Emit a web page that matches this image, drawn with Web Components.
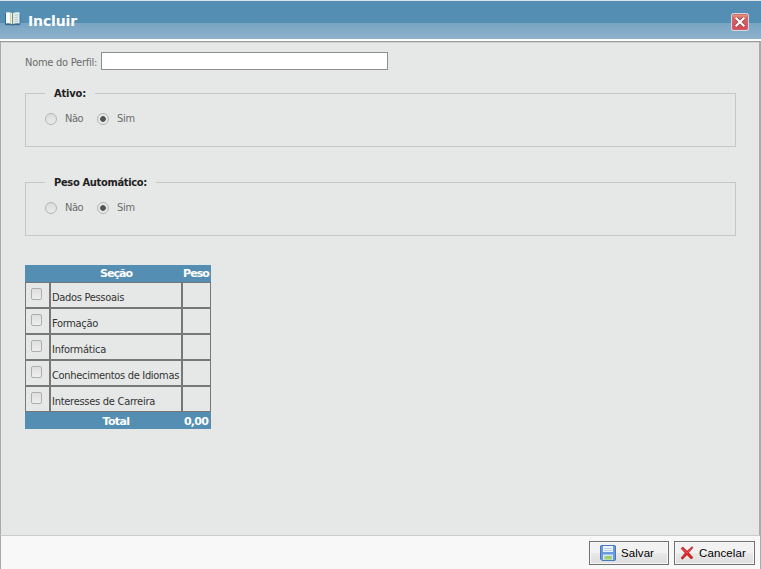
<!DOCTYPE html>
<html lang="pt-BR">
<head>
<meta charset="utf-8">
<title>Incluir</title>
<style>
  body {
    margin: 0;
    background: #f8f8f8;
    font: 11px/14px "DejaVu Sans Condensed", "DejaVu Sans", sans-serif;
    color: #6b6b6b;
  }
</style>
</head>
<body>
<profile-dialog></profile-dialog>

<script>
// Text run that is tracked to a given width in pixels
class FitText extends HTMLElement {
  constructor() {
    super();
    this.attachShadow({ mode: 'open' });
  }

  connectedCallback() {
    this.shadowRoot.innerHTML = `
      <style>
        :host { display: inline-block; white-space: nowrap; }
        span { display: inline-block; }
      </style>
      <span><slot></slot></span>
    `;
    const span = this.shadowRoot.querySelector('span');
    const target = Number(this.getAttribute('width'));
    const count = this.textContent.length;
    const natural = span.getBoundingClientRect().width;
    if (target && natural) {
      span.style.letterSpacing = `${(target - natural) / count}px`;
      this.style.width = `${target}px`;
    }
  }
}

class DialogHeader extends HTMLElement {
  constructor() {
    super();
    this.attachShadow({ mode: 'open' });
  }

  connectedCallback() {
    this.shadowRoot.innerHTML = `
      <style>
        :host {
          display: flex;
          box-sizing: border-box;
          height: 41px;
          padding: 0 12px 0 5px;
          border-top: 1px solid #d9e4e8;
          border-bottom: 2px solid #fff;
          background: linear-gradient(#558eb3 0 22px, #78a5c2 22px, #8fb2cc 38px);
        }
        .book { margin-top: 10px; }
        .title {
          flex: 1;
          padding: 12px 0 0 7px;
          font: bold 14px/16px "DejaVu Sans", sans-serif;
          color: #fff;
        }
        button {
          width: 18px;
          height: 18px;
          margin: 12px 0 0;
          padding: 0;
          border: 0;
          background: none;
        }
        svg { display: block; }
      </style>
      <svg class="book" width="16" height="16" viewBox="0 0 16 16">
        <path d="M.5 2.5v11.2h6.3l1 .8 1-.8h6V3" fill="#306899" stroke="#3a668c"/>
        <path d="M1 1.5Q5 .8 7.5 2.4v10.8Q4.5 12 1 12.5z" fill="#f7faf7"/>
        <path d="M7.5 2.4Q11 .6 14.6 1.5v11Q11 12 7.5 13.2z" fill="#e4efef"/>
        <path d="M7.5 2.4v10.8" stroke="#789276" stroke-width="1.2"/>
        <path d="M5.5 2v10" stroke="#c8d5a6"/>
        <path d="M9.5 4.3l3.7-.5M9.5 6.5l3.7-.5M9.5 8.7l3.7-.5M9.5 10.7l3.7-.4" stroke="#a6bdca" stroke-width=".8"/>
      </svg>
      <div class="title"><fit-text width="49">Incluir</fit-text></div>
      <button type="button" aria-label="Fechar">
        <svg width="18" height="18" viewBox="0 0 18 18">
          <defs>
            <linearGradient id="red" x2="0" y2="1">
              <stop stop-color="#e5a07a"/>
              <stop offset=".25" stop-color="#d96562"/>
              <stop offset="1" stop-color="#d84655"/>
            </linearGradient>
          </defs>
          <rect x=".5" y=".5" width="17" height="17" rx="2" fill="#f3d9dc" stroke="#d5d6df"/>
          <rect x="1.5" y="1.5" width="15" height="15" rx="1" fill="url(#red)" stroke="#c84a55" stroke-width=".7"/>
          <path d="M5 5l8 8M13 5l-8 8" stroke="#8d4d50" stroke-width="3.6"/>
          <path d="M4.7 4.7l8.6 8.6M13.3 4.7l-8.6 8.6" stroke="#fff" stroke-width="2"/>
        </svg>
      </button>
    `;
  }
}

class RadioOption extends HTMLElement {
  constructor() {
    super();
    this.attachShadow({ mode: 'open' });
  }

  connectedCallback() {
    this.shadowRoot.innerHTML = `
      <style>
        :host { display: flex; align-items: center; gap: 8px; }
        .dot {
          box-sizing: border-box;
          width: 12px;
          height: 12px;
          border: 1px solid #b4b4b4;
          border-radius: 50%;
          background: linear-gradient(#dcdcdc, #eaeaea);
        }
        :host([checked]) .dot {
          background: radial-gradient(circle, #555 0 2.5px, #e9e9e9 3.2px);
        }
      </style>
      <div class="dot"></div>
      <slot></slot>
    `;
  }
}

class OptionGroup extends HTMLElement {
  constructor() {
    super();
    this.attachShadow({ mode: 'open' });
  }

  connectedCallback() {
    this.shadowRoot.innerHTML = `
      <style>
        :host { display: block; height: 61px; }
        fieldset {
          box-sizing: border-box;
          height: 61px;
          margin: 0;
          padding: 12px 0 0 19px;
          border: 1px solid #c4c7c7;
        }
        legend {
          height: 14px;
          padding: 0 9px;
          font-weight: bold;
          line-height: 16px;
          color: #222;
        }
        .options { display: flex; gap: 14px; }
      </style>
      <fieldset>
        <legend><slot name="legend"></slot></legend>
        <div class="options"><slot></slot></div>
      </fieldset>
    `;
  }
}

class SectionTable extends HTMLElement {
  constructor() {
    super();
    this.attachShadow({ mode: 'open' });
  }

  connectedCallback() {
    const sections = [
      ['Dados Pessoais', 72],
      ['Formação', 46],
      ['Informática', 54],
      ['Conhecimentos de Idiomas', 127],
      ['Interesses de Carreira', 103]
    ];
    const rows = sections.map(([name, width]) => `
      <div class="row">
        <div class="cell"><i class="check"></i></div>
        <div class="cell name"><fit-text width="${width}">${name}</fit-text></div>
        <div class="cell"></div>
      </div>
    `).join('');

    this.shadowRoot.innerHTML = `
      <style>
        :host { display: block; width: 186px; color: #333; }
        .row, .bar { display: grid; grid-template-columns: 25px 132px 29px; }
        .row { height: 26px; }
        .bar {
          height: 17px;
          background: #558eb3;
          color: #fff;
          font: bold 11px/17px "DejaVu Sans", sans-serif;
          text-align: center;
        }
        .bar.total { line-height: 19px; }
        .bar > :first-child { grid-column: 2; }
        .bar > :last-child { margin-right: 1px; }
        .cell { border: 1px solid #777; }
        .check {
          display: block;
          box-sizing: border-box;
          width: 11px;
          height: 12px;
          margin: 5px 0 0 5px;
          border: 1px solid #adadad;
          border-radius: 2px;
          background: linear-gradient(#dedede, #eee);
        }
        .name { padding: 8px 0 0 1px; }
      </style>
      <div class="bar">
        <div><fit-text width="32">Seção</fit-text></div>
        <div><fit-text width="26">Peso</fit-text></div>
      </div>
      ${rows}
      <div class="bar total">
        <div><fit-text width="27">Total</fit-text></div>
        <div><fit-text width="24">0,00</fit-text></div>
      </div>
    `;
  }
}

class ActionButton extends HTMLElement {
  constructor() {
    super();
    this.attachShadow({ mode: 'open' });
  }

  connectedCallback() {
    this.shadowRoot.innerHTML = `
      <style>
        :host { display: block; }
        button {
          display: flex;
          align-items: center;
          gap: 5px;
          box-sizing: border-box;
          width: var(--button-width, 81px);
          height: 24px;
          padding: 0 0 1px var(--inset, 5px);
          border: 1px solid #707070;
          box-shadow: inset 0 0 0 1px #f8f8f8;
          background: linear-gradient(#f2f2f2 50%, #e9e9e9 50%, #ddd);
          color: #000;
          font: 11.5px/16px "Liberation Sans", sans-serif;
        }
      </style>
      <button type="button"><slot name="icon"></slot><slot></slot></button>
    `;
  }
}

class ProfileDialog extends HTMLElement {
  constructor() {
    super();
    this.attachShadow({ mode: 'open' });
  }

  connectedCallback() {
    this.shadowRoot.innerHTML = `
      <style>
        :host { display: flex; flex-direction: column; height: 569px; }
        main {
          flex: 1;
          box-sizing: border-box;
          padding: 10px 23px 0 24px;
          border: 1px solid #999;
          border-right: 2px solid #aaa;
          border-bottom-color: #ccc;
          border-left-color: #aaa;
          background: #e6e8e7;
          box-shadow: inset 0 1px #d2d3d3;
        }
        .field { display: flex; gap: 4px; height: 18px; margin-bottom: 16px; }
        .field label { padding-top: 4px; }
        .field input {
          box-sizing: border-box;
          width: 287px;
          height: 18px;
          padding: 0 3px;
          border: 1px solid #8d8d8d;
          background: #fff;
          font: inherit;
        }
        option-group { margin-bottom: 28px; }
        section-table { margin-top: 29px; }
        footer {
          display: flex;
          justify-content: flex-end;
          gap: 5px;
          box-sizing: border-box;
          height: 33px;
          padding: 5px 5px 0 0;
          border-left: 1px solid #aaa;
          border-right: 1px solid #aaa;
          background: #f8f8f8;
        }
        .save { --inset: 10px; --button-width: 80px; }
      </style>
      <dialog-header></dialog-header>
      <main>
        <div class="field">
          <label for="name"><fit-text width="72">Nome do Perfil:</fit-text></label>
          <input id="name" type="text">
        </div>
        <option-group>
          <fit-text slot="legend" width="32">Ativo:</fit-text>
          <radio-option><fit-text width="18">Não</fit-text></radio-option>
          <radio-option checked><fit-text width="18">Sim</fit-text></radio-option>
        </option-group>
        <option-group>
          <fit-text slot="legend" width="93">Peso Automático:</fit-text>
          <radio-option><fit-text width="18">Não</fit-text></radio-option>
          <radio-option checked><fit-text width="18">Sim</fit-text></radio-option>
        </option-group>
        <section-table></section-table>
      </main>
      <footer>
        <action-button class="save">
          <svg slot="icon" width="16" height="16" viewBox="0 0 16 16">
            <path d="M1 .5h14l.5.5v14l-.5.5H2L.5 14V1z" fill="#6a9bdc" stroke="#4878bd"/>
            <path d="M3 1h10v6H3z" fill="#edf4fc"/>
            <path d="M4 3.5h8M4 5.5h8" stroke="#b9cde6"/>
            <path d="M3 9.5h10V15H3z" fill="#d5e5f3"/>
            <path d="M4.5 11h7.500v3.500H4.500z" fill="#9ed06e"/>
          </svg>
          <fit-text width="33">Salvar</fit-text>
        </action-button>
        <action-button>
          <svg slot="icon" width="14" height="14" viewBox="0 0 14 14">
            <path d="M1 2.500L3 1l4 4.200L12 .7l1 .8-4.300 5.300L13 11.500 11 13 7 8.800 2.500 13.300 1 12l4.200-5z" fill="#d9262b" stroke="#a91b20" stroke-width=".6"/>
            <path d="M2.300 2.600l4.700 4.600 4-4" fill="none" stroke="#f16a65" stroke-width=".8"/>
          </svg>
          <fit-text width="47">Cancelar</fit-text>
        </action-button>
      </footer>
    `;
  }
}

customElements.define('fit-text', FitText);
customElements.define('dialog-header', DialogHeader);
customElements.define('radio-option', RadioOption);
customElements.define('option-group', OptionGroup);
customElements.define('section-table', SectionTable);
customElements.define('action-button', ActionButton);
customElements.define('profile-dialog', ProfileDialog);
</script>
</body>
</html>
